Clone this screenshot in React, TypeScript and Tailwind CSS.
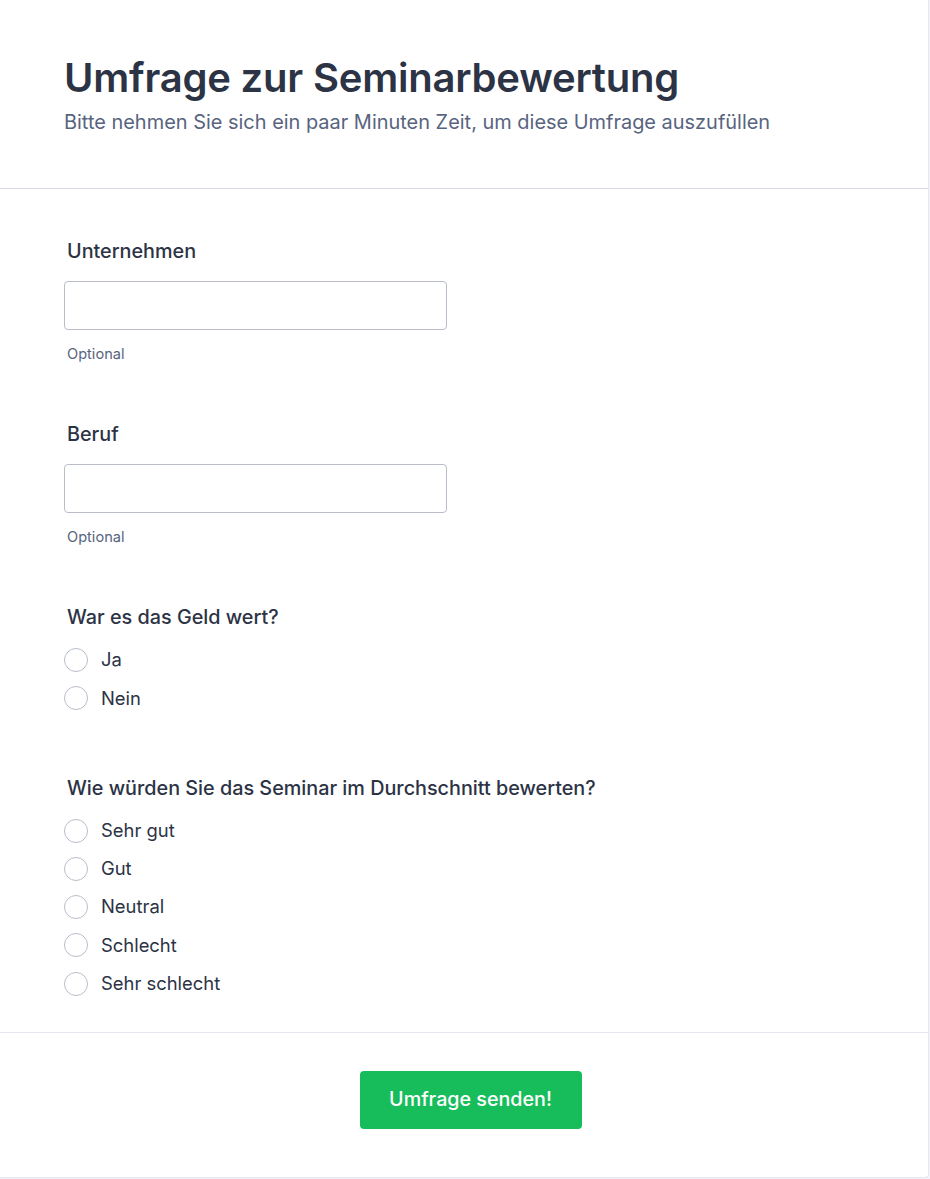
import React from "react";

function Radio({ label }: { label: string }) {
  return (
    <label className="flex items-center h-[38.25px]">
      <span className="w-6 h-6 rounded-full border border-[#b8bdc9] bg-white shrink-0" />
      <span className="ml-[13px] text-[18.4px] text-[#2c3345]">{label}</span>
    </label>
  );
}

function Label({ children }: { children: React.ReactNode }) {
  return <div className="pl-[3px] text-[19.8px] font-medium text-[#2c3345] leading-[24px]">{children}</div>;
}

function TextField({ label }: { label: string }) {
  return (
    <div className="pt-[38px] pb-[42px]">
      <Label>{label}</Label>
      <div className="mt-[18px] w-[383px] h-[49px] rounded-[4px] border border-[#b8bdc9] bg-white" />
      <div className="pl-[3px] mt-[16px] text-[14.6px] text-[#57647e] leading-[16px]">Optional</div>
    </div>
  );
}

export default function App() {
  return (
    <div className="min-h-[1179px] bg-[#f3f3fe]" style={{ fontFamily: "Inter, 'Noto Sans', sans-serif" }}>
      <div className="w-[929px] h-[1178px] bg-white border-r border-b border-[#e6e6ef] rounded-br-[4px] flex flex-col">
        <div className="px-[64px] pt-[54px] pb-[54px] border-b border-[#d8dae9]">
          <h1 className="text-[40px] font-semibold text-[#2c3345] leading-[48px] tracking-[-0.2px]">Umfrage zur Seminarbewertung</h1>
          <p className="mt-[8px] text-[19.95px] text-[#57647e] leading-[24px]">Bitte nehmen Sie sich ein paar Minuten Zeit, um diese Umfrage auszufüllen</p>
        </div>
        <div className="px-[64px] pt-[12px] border-b border-[#e6e6ef] pb-[29px]">
          <TextField label="Unternehmen" />
          <div className="-mt-[20px]">
            <TextField label="Beruf" />
          </div>
          <div className="mt-[18px]">
            <Label>War es das Geld wert?</Label>
            <div className="mt-[12px] flex flex-col">
              <Radio label="Ja" />
              <Radio label="Nein" />
            </div>
          </div>
          <div className="mt-[58px]">
            <Label>Wie würden Sie das Seminar im Durchschnitt bewerten?</Label>
            <div className="mt-[12px] flex flex-col">
              <Radio label="Sehr gut" />
              <Radio label="Gut" />
              <Radio label="Neutral" />
              <Radio label="Schlecht" />
              <Radio label="Sehr schlecht" />
            </div>
          </div>
        </div>
        <div className="flex justify-center pt-[38px] pl-[13px]">
          <button className="w-[222px] h-[58px] rounded-[4px] bg-[#18bd5b] text-white text-[19.7px] font-medium">Umfrage senden!</button>
        </div>
      </div>
    </div>
  );
}
